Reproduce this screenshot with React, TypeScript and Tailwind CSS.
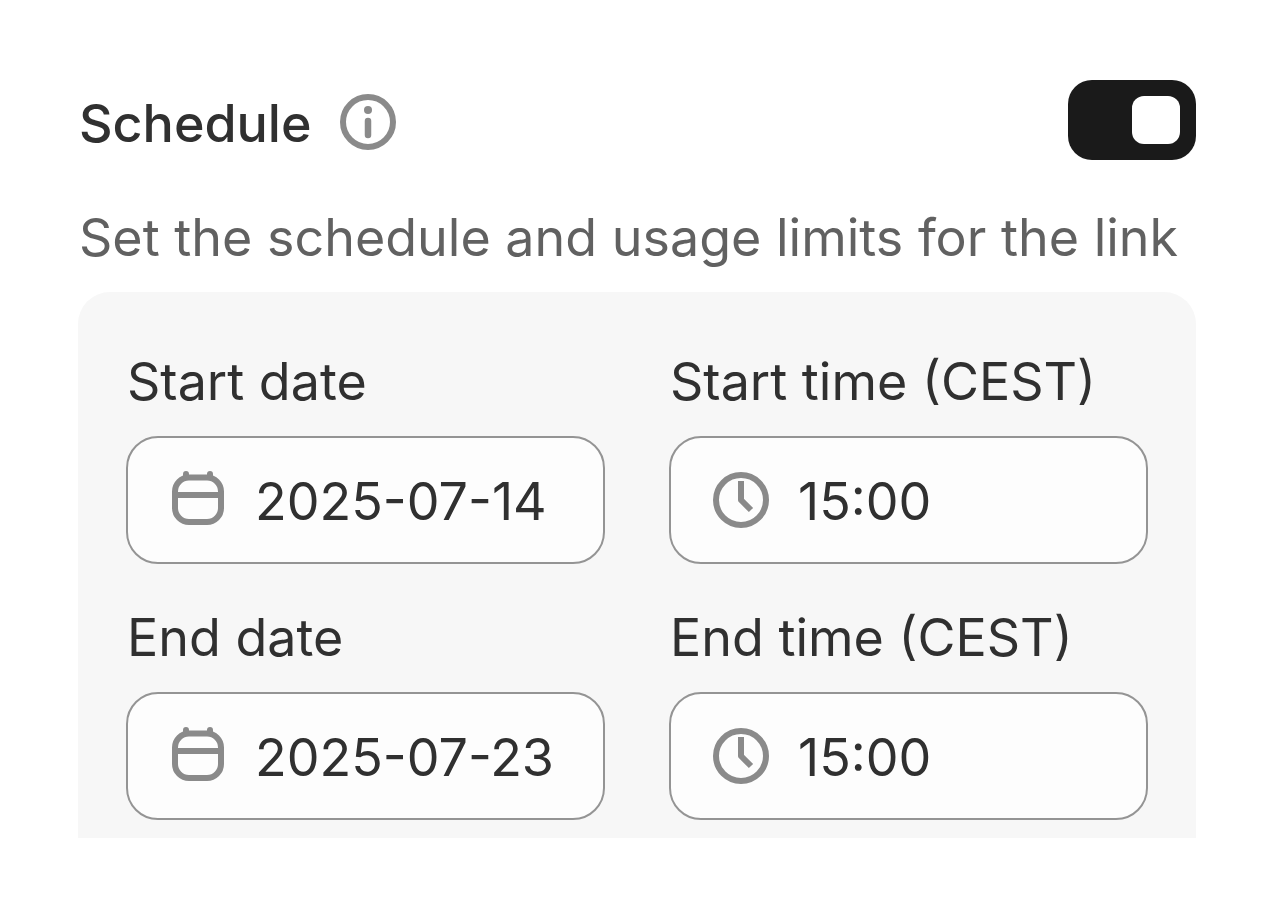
import React, { useState } from 'react';

const InfoIcon = () => (
  <svg className="w-14 h-14 shrink-0" viewBox="0 0 56 56" fill="none" aria-hidden="true">
    <circle cx="28" cy="28" r="25" stroke="currentColor" strokeWidth="6" />
    <circle cx="28" cy="16" r="4" fill="currentColor" />
    <path d="M28 27v14" stroke="currentColor" strokeWidth="6.5" strokeLinecap="round" />
  </svg>
);

const CalendarIcon = () => (
  <svg className="w-14 h-14 shrink-0 overflow-visible" viewBox="0 0 56 56" fill="none" stroke="currentColor" strokeWidth="6" aria-hidden="true">
    <rect x="5" y="5.5" width="46" height="44.5" rx="14" />
    <path d="M5 23h46" />
    <path d="M16 2v3M40 2v3" strokeLinecap="round" />
  </svg>
);

const ClockIcon = () => (
  <svg className="w-14 h-14 shrink-0" viewBox="0 0 56 56" fill="none" stroke="currentColor" strokeWidth="6" aria-hidden="true">
    <circle cx="28" cy="28" r="25" />
    <path d="M28 9v19l10 10" strokeLinejoin="round" />
  </svg>
);

interface FieldProps {
  id: string;
  label: string;
  value: string;
  icon: React.ReactNode;
}

const Field: React.FC<FieldProps> = ({ id, label, value, icon }) => (
  <div className="min-w-0">
    <label htmlFor={id} className="block pl-px text-[52px] leading-[66px] whitespace-nowrap text-[#303030]">
      {label}
    </label>
    <div className="mt-[21px] flex h-32 items-center gap-7 rounded-[32px] border-2 border-[#949494] bg-[#fdfdfd] pl-[42px] pr-4 text-[#8a8a8a]">
      {icon}
      <input
        id={id}
        type="text"
        defaultValue={value}
        className="min-w-0 flex-1 bg-transparent pt-1 pl-px text-[52px] leading-[66px] text-[#303030] outline-none"
      />
    </div>
  </div>
);

export default function App() {
  const [enabled, setEnabled] = useState(true);

  return (
    <main className="min-h-screen bg-white px-[78px] pt-20 font-['Inter','Liberation_Sans',sans-serif]">
      {/* Header with toggle */}
      <div className="flex items-start justify-between">
        <div className="flex h-[84px] items-center gap-7 pl-px">
          <h2 id="schedule-title" className="pt-1 text-[52px] leading-[66px] font-medium text-[#303030]">
            Schedule
          </h2>
          <button type="button" aria-label="About schedule" className="text-[#8a8a8a]">
            <InfoIcon />
          </button>
        </div>
        <button
          type="button"
          role="switch"
          aria-checked={enabled}
          aria-labelledby="schedule-title"
          onClick={() => setEnabled(!enabled)}
          className={`flex h-20 w-32 items-center rounded-3xl px-4 ${enabled ? 'justify-end bg-[#1a1a1a]' : 'justify-start bg-[#8a8a8a]'}`}
        >
          <span className="h-12 w-12 rounded-xl bg-white" />
        </button>
      </div>

      <p className="mt-[41px] pl-px text-[52px] leading-[66px] whitespace-nowrap text-[#616161]">
        Set the schedule and usage limits for the link
      </p>

      {/* Date and time fields */}
      <div className="mt-[21px] grid grid-cols-2 gap-x-16 gap-y-[41px] rounded-t-[32px] bg-[#f7f7f7] px-12 pt-[57px] pb-[18px]">
        <Field id="start-date" label="Start date" value="2025-07-14" icon={<CalendarIcon />} />
        <Field id="start-time" label="Start time (CEST)" value="15:00" icon={<ClockIcon />} />
        <Field id="end-date" label="End date" value="2025-07-23" icon={<CalendarIcon />} />
        <Field id="end-time" label="End time (CEST)" value="15:00" icon={<ClockIcon />} />
      </div>
    </main>
  );
}
